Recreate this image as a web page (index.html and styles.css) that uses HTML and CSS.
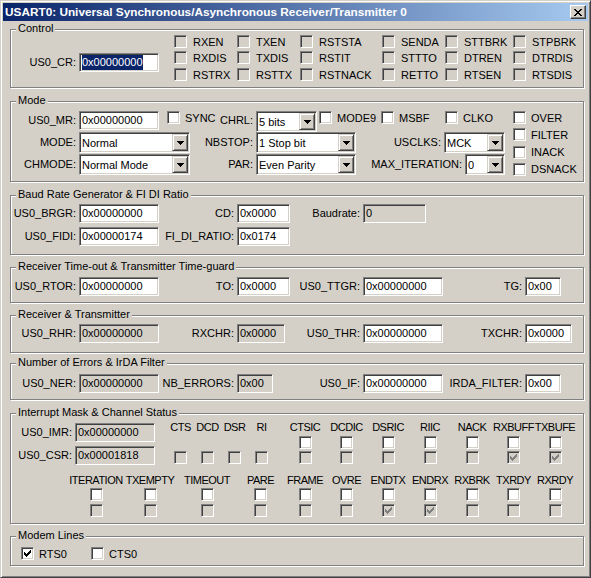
FILE: index.html
```html
<!DOCTYPE html>
<html lang="en">
<head>
    <meta charset="UTF-8">
    <title>USART0 - Peripheral Dialog</title>
    <link rel="stylesheet" href="styles.css">
</head>
<body>
<div class="win">
    <div class="titlebar">
        <span class="title">USART0: Universal Synchronous/Asynchronous Receiver/Transmitter 0</span>
        <span class="close"><svg width="8" height="7" viewBox="0 0 8 7"><path d="M0 0h2v1h-2zM6 0h2v1h-2zM1 1h2v1h-2zM5 1h2v1h-2zM2 2h4v1h-4zM3 3h2v1h-2zM2 4h4v1h-4zM1 5h2v1h-2zM5 5h2v1h-2zM0 6h2v1h-2zM6 6h2v1h-2z" fill="#000"/></svg></span>
    </div>

    <!-- Control -->
    <div class="grp g-ctrl">
        <span class="legend">Control</span>
        <div class="ctrl-left">
            <span class="lbl w68">US0_CR:</span>
            <span class="fld w80"><span class="sel">0x00000000</span></span>
        </div>
        <div class="ctrl-bits">
            <label class="chk"><span class="cb dis"></span>RXEN</label>
            <label class="chk"><span class="cb dis"></span>TXEN</label>
            <label class="chk"><span class="cb dis"></span>RSTSTA</label>
            <label class="chk"><span class="cb dis"></span>SENDA</label>
            <label class="chk"><span class="cb dis"></span>STTBRK</label>
            <label class="chk"><span class="cb dis"></span>STPBRK</label>
            <label class="chk"><span class="cb dis"></span>RXDIS</label>
            <label class="chk"><span class="cb dis"></span>TXDIS</label>
            <label class="chk"><span class="cb dis"></span>RSTIT</label>
            <label class="chk"><span class="cb dis"></span>STTTO</label>
            <label class="chk"><span class="cb dis"></span>DTREN</label>
            <label class="chk"><span class="cb dis"></span>DTRDIS</label>
            <label class="chk"><span class="cb dis"></span>RSTRX</label>
            <label class="chk"><span class="cb dis"></span>RSTTX</label>
            <label class="chk"><span class="cb dis"></span>RSTNACK</label>
            <label class="chk"><span class="cb dis"></span>RETTO</label>
            <label class="chk"><span class="cb dis"></span>RTSEN</label>
            <label class="chk"><span class="cb dis"></span>RTSDIS</label>
        </div>
    </div>

    <!-- Mode -->
    <div class="grp g-mode">
        <span class="legend">Mode</span>
        <div class="mode-main">
            <div class="row r1">
                <span class="lbl w68">US0_MR:</span>
                <span class="fld w80">0x00000000</span>
                <label class="chk w53 ml8"><span class="cb"></span>SYNC</label>
                <span class="lbl w36">CHRL:</span>
                <span class="combo w61">5 bits<span class="dd"><svg width="7" height="4" viewBox="0 0 7 4"><path d="M0 0h7v1h-7zM1 1h5v1h-5zM2 2h3v1h-3zM3 3h1v1h-1z"/></svg></span></span>
                <label class="chk w62 ml2"><span class="cb"></span>MODE9</label>
                <label class="chk w64"><span class="cb"></span>MSBF</label>
                <label class="chk"><span class="cb"></span>CLKO</label>
            </div>
            <div class="row">
                <span class="lbl w68">MODE:</span>
                <span class="combo w111">Normal<span class="dd"><svg width="7" height="4" viewBox="0 0 7 4"><path d="M0 0h7v1h-7zM1 1h5v1h-5zM2 2h3v1h-3zM3 3h1v1h-1z"/></svg></span></span>
                <span class="lbl w66">NBSTOP:</span>
                <span class="combo w100">1 Stop bit<span class="dd"><svg width="7" height="4" viewBox="0 0 7 4"><path d="M0 0h7v1h-7zM1 1h5v1h-5zM2 2h3v1h-3zM3 3h1v1h-1z"/></svg></span></span>
                <span class="lbl w88">USCLKS:</span>
                <span class="combo w61">MCK<span class="dd"><svg width="7" height="4" viewBox="0 0 7 4"><path d="M0 0h7v1h-7zM1 1h5v1h-5zM2 2h3v1h-3zM3 3h1v1h-1z"/></svg></span></span>
            </div>
            <div class="row r3">
                <span class="lbl w68">CHMODE:</span>
                <span class="combo w111">Normal Mode<span class="dd"><svg width="7" height="4" viewBox="0 0 7 4"><path d="M0 0h7v1h-7zM1 1h5v1h-5zM2 2h3v1h-3zM3 3h1v1h-1z"/></svg></span></span>
                <span class="lbl w66">PAR:</span>
                <span class="combo w100">Even Parity<span class="dd"><svg width="7" height="4" viewBox="0 0 7 4"><path d="M0 0h7v1h-7zM1 1h5v1h-5zM2 2h3v1h-3zM3 3h1v1h-1z"/></svg></span></span>
                <span class="lbl w109">MAX_ITERATION:</span>
                <span class="combo w40">0<span class="dd"><svg width="7" height="4" viewBox="0 0 7 4"><path d="M0 0h7v1h-7zM1 1h5v1h-5zM2 2h3v1h-3zM3 3h1v1h-1z"/></svg></span></span>
            </div>
        </div>
        <div class="mode-side">
            <label class="chk"><span class="cb"></span>OVER</label>
            <label class="chk"><span class="cb"></span>FILTER</label>
            <label class="chk"><span class="cb"></span>INACK</label>
            <label class="chk"><span class="cb"></span>DSNACK</label>
        </div>
    </div>

    <!-- Baud Rate -->
    <div class="grp g-baud">
        <span class="legend">Baud Rate Generator &amp; FI DI Ratio</span>
        <div class="regs">
            <span class="lbl">US0_BRGR:</span>
            <span class="fld w80">0x00000000</span>
            <span class="lbl">CD:</span>
            <span class="fld w53">0x0000</span>
            <span class="lbl">Baudrate:</span>
            <span class="fld ro w63">0</span>
            <span class="lbl nl">US0_FIDI:</span>
            <span class="fld w80">0x00000174</span>
            <span class="lbl">FI_DI_RATIO:</span>
            <span class="fld w53">0x0174</span>
        </div>
    </div>

    <!-- Time-out / Time-guard -->
    <div class="grp g-tout">
        <span class="legend">Receiver Time-out &amp; Transmitter Time-guard</span>
        <div class="regs">
            <span class="lbl">US0_RTOR:</span>
            <span class="fld w80">0x00000000</span>
            <span class="lbl">TO:</span>
            <span class="fld w53">0x0000</span>
            <span class="lbl">US0_TTGR:</span>
            <span class="fld w80">0x00000000</span>
            <span class="lbl">TG:</span>
            <span class="fld w36">0x00</span>
        </div>
    </div>

    <!-- Receiver & Transmitter -->
    <div class="grp g-rt">
        <span class="legend">Receiver &amp; Transmitter</span>
        <div class="regs">
            <span class="lbl">US0_RHR:</span>
            <span class="fld ro w80">0x00000000</span>
            <span class="lbl">RXCHR:</span>
            <span class="fld ro w48">0x0000</span>
            <span class="lbl">US0_THR:</span>
            <span class="fld w80">0x00000000</span>
            <span class="lbl">TXCHR:</span>
            <span class="fld w47">0x0000</span>
        </div>
    </div>

    <!-- Errors / IrDA -->
    <div class="grp g-err">
        <span class="legend">Number of Errors &amp; IrDA Filter</span>
        <div class="regs">
            <span class="lbl">US0_NER:</span>
            <span class="fld ro w80">0x00000000</span>
            <span class="lbl">NB_ERRORS:</span>
            <span class="fld ro w36">0x00</span>
            <span class="lbl">US0_IF:</span>
            <span class="fld w80">0x00000000</span>
            <span class="lbl">IRDA_FILTER:</span>
            <span class="fld w36">0x00</span>
        </div>
    </div>

    <!-- Interrupt Mask & Channel Status -->
    <div class="grp g-int">
        <span class="legend">Interrupt Mask &amp; Channel Status</span>
        <div class="int-top">
            <div class="int-regs">
                <div class="row"><span class="lbl w64">US0_IMR:</span><span class="fld ro w80">0x00000000</span></div>
                <div class="row"><span class="lbl w64">US0_CSR:</span><span class="fld ro w80">0x00001818</span></div>
            </div>
            <div class="bits bits-top">
                <div class="bit"><span class="bn">CTS</span><span class="cb none"></span><span class="cb dis"></span></div>
                <div class="bit"><span class="bn">DCD</span><span class="cb none"></span><span class="cb dis"></span></div>
                <div class="bit"><span class="bn">DSR</span><span class="cb none"></span><span class="cb dis"></span></div>
                <div class="bit"><span class="bn">RI</span><span class="cb none"></span><span class="cb dis"></span></div>
                <div class="bit"><span class="bn">CTSIC</span><span class="cb"></span><span class="cb dis"></span></div>
                <div class="bit"><span class="bn">DCDIC</span><span class="cb"></span><span class="cb dis"></span></div>
                <div class="bit"><span class="bn">DSRIC</span><span class="cb"></span><span class="cb dis"></span></div>
                <div class="bit"><span class="bn">RIIC</span><span class="cb"></span><span class="cb dis"></span></div>
                <div class="bit"><span class="bn">NACK</span><span class="cb"></span><span class="cb dis"></span></div>
                <div class="bit"><span class="bn">RXBUFF</span><span class="cb"></span><span class="cb dis on"><svg width="7" height="7" viewBox="0 0 7 7"><path d="M6 0h1v1h-1zM5 1h2v1h-2zM0 2h1v1h-1zM4 2h3v1h-3zM0 3h2v1h-2zM3 3h3v1h-3zM0 4h5v1h-5zM1 5h3v1h-3zM2 6h1v1h-1z"/></svg></span></div>
                <div class="bit"><span class="bn">TXBUFE</span><span class="cb"></span><span class="cb dis on"><svg width="7" height="7" viewBox="0 0 7 7"><path d="M6 0h1v1h-1zM5 1h2v1h-2zM0 2h1v1h-1zM4 2h3v1h-3zM0 3h2v1h-2zM3 3h3v1h-3zM0 4h5v1h-5zM1 5h3v1h-3zM2 6h1v1h-1z"/></svg></span></div>
            </div>
        </div>
        <div class="bits bits-bot">
            <div class="bit"><span class="bn">ITERATION</span><span class="cb"></span><span class="cb dis"></span></div>
            <div class="bit"><span class="bn">TXEMPTY</span><span class="cb"></span><span class="cb dis"></span></div>
            <div class="bit"><span class="bn">TIMEOUT</span><span class="cb"></span><span class="cb dis"></span></div>
            <div class="bit"><span class="bn">PARE</span><span class="cb"></span><span class="cb dis"></span></div>
            <div class="bit"><span class="bn">FRAME</span><span class="cb"></span><span class="cb dis"></span></div>
            <div class="bit"><span class="bn">OVRE</span><span class="cb"></span><span class="cb dis"></span></div>
            <div class="bit"><span class="bn">ENDTX</span><span class="cb"></span><span class="cb dis on"><svg width="7" height="7" viewBox="0 0 7 7"><path d="M6 0h1v1h-1zM5 1h2v1h-2zM0 2h1v1h-1zM4 2h3v1h-3zM0 3h2v1h-2zM3 3h3v1h-3zM0 4h5v1h-5zM1 5h3v1h-3zM2 6h1v1h-1z"/></svg></span></div>
            <div class="bit"><span class="bn">ENDRX</span><span class="cb"></span><span class="cb dis on"><svg width="7" height="7" viewBox="0 0 7 7"><path d="M6 0h1v1h-1zM5 1h2v1h-2zM0 2h1v1h-1zM4 2h3v1h-3zM0 3h2v1h-2zM3 3h3v1h-3zM0 4h5v1h-5zM1 5h3v1h-3zM2 6h1v1h-1z"/></svg></span></div>
            <div class="bit"><span class="bn">RXBRK</span><span class="cb"></span><span class="cb dis"></span></div>
            <div class="bit"><span class="bn">TXRDY</span><span class="cb"></span><span class="cb dis"></span></div>
            <div class="bit"><span class="bn">RXRDY</span><span class="cb"></span><span class="cb dis"></span></div>
        </div>
    </div>

    <!-- Modem Lines -->
    <div class="grp g-modem">
        <span class="legend">Modem Lines</span>
        <label class="chk w70"><span class="cb on"><svg width="7" height="7" viewBox="0 0 7 7"><path d="M6 0h1v1h-1zM5 1h2v1h-2zM0 2h1v1h-1zM4 2h3v1h-3zM0 3h2v1h-2zM3 3h3v1h-3zM0 4h5v1h-5zM1 5h3v1h-3zM2 6h1v1h-1z"/></svg></span>RTS0</label>
        <label class="chk"><span class="cb"></span>CTS0</label>
    </div>
</div>
</body>
</html>
```

FILE: styles.css
```css
* {
    box-sizing: border-box;
}
body {
    margin: 0;
    background: #d4d0c8;
    font-family: "Liberation Sans", Arial, sans-serif;
    font-size: 11px;
    color: #000;
}

/* window frame */
.win {
    width: 591px;
    height: 578px;
    padding: 2px;
    background: #d4d0c8;
    border: 1px solid;
    border-color: #d4d0c8 #404040 #404040 #d4d0c8;
    box-shadow: inset 1px 1px #fff, inset -1px -1px #808080;
}
.titlebar {
    height: 18px;
    display: flex;
    align-items: center;
    padding: 0 2px;
    background: linear-gradient(to right, #0a246a, #a6caf0);
}
.title {
    color: #fff;
    font-size: 11.8px;
    font-weight: bold;
    white-space: nowrap;
}
.close {
    margin-left: auto;
    width: 16px;
    height: 14px;
    display: flex;
    align-items: center;
    justify-content: center;
    background: #d4d0c8;
    border: 1px solid;
    border-color: #fff #404040 #404040 #fff;
    box-shadow: inset -1px -1px #808080;
}
.close svg {
    display: block;
}

/* group boxes */
.grp {
    position: relative;
    width: 574px;
    margin-left: 7px;
    border: 1px solid #808080;
    box-shadow: inset 1px 1px #fff, 1px 1px #fff;
}
.legend {
    position: absolute;
    top: -8px;
    left: 5px;
    padding: 0 2px;
    line-height: 13px;
    background: #d4d0c8;
    white-space: nowrap;
}
.g-ctrl  { margin-top: 8px;  height: 59px; padding-top: 5px; display: flex; align-items: flex-start; }
.g-mode  { margin-top: 13px; height: 81px; padding-top: 9px; display: flex; align-items: flex-start; }
.g-baud  { margin-top: 13px; height: 60px; padding-top: 8px; }
.g-tout  { margin-top: 12px; height: 36px; padding-top: 9px; }
.g-rt    { margin-top: 12px; height: 38px; padding-top: 8px; }
.g-err   { margin-top: 10px; height: 37px; padding-top: 10px; }
.g-int   { margin-top: 13px; height: 111px; padding-top: 7px; }
.g-modem { margin-top: 12px; height: 30px; padding: 10px 0 0 10px; display: flex; align-items: flex-start; }

/* basic controls */
.row {
    display: flex;
    align-items: center;
}
.lbl {
    flex: none;
    text-align: right;
    padding-right: 3px;
    line-height: 19px;
    white-space: nowrap;
}
.fld {
    flex: none;
    height: 19px;
    padding: 0 2px;
    line-height: 17px;
    background: #fff;
    border: 1px solid;
    border-color: #808080 #fff #fff #808080;
    box-shadow: inset 1px 1px #404040, inset -1px -1px #d4d0c8;
    white-space: nowrap;
    overflow: hidden;
}
.fld.ro {
    background: #d4d0c8;
}
.sel {
    display: inline-block;
    line-height: 15px;
    background: #0a246a;
    color: #fff;
}
.combo {
    flex: none;
    display: flex;
    align-items: center;
    height: 21px;
    padding: 1px 1px 1px 2px;
    background: #fff;
    border: 1px solid;
    border-color: #808080 #fff #fff #808080;
    box-shadow: inset 1px 1px #404040, inset -1px -1px #d4d0c8;
    white-space: nowrap;
}
.dd {
    margin-left: auto;
    width: 16px;
    height: 17px;
    display: flex;
    align-items: center;
    justify-content: center;
    background: #d4d0c8;
    border: 1px solid;
    border-color: #d4d0c8 #404040 #404040 #d4d0c8;
    box-shadow: inset 1px 1px #fff, inset -1px -1px #808080;
}
.dd svg {
    display: block;
}
.chk {
    flex: none;
    display: flex;
    align-items: center;
    gap: 5px;
    height: 13px;
    white-space: nowrap;
}
.cb {
    flex: none;
    display: block;
    width: 13px;
    height: 13px;
    padding: 2px;
    background: #fff;
    border: 1px solid;
    border-color: #808080 #fff #fff #808080;
    box-shadow: inset 1px 1px #404040, inset -1px -1px #d4d0c8;
}
.cb.dis {
    background: #d4d0c8;
}
.cb svg {
    display: block;
    fill: #000;
}
.cb.dis svg {
    fill: #808080;
}
.cb.none {
    visibility: hidden;
}

/* widths */
.w36  { width: 36px; }
.w40  { width: 40px; }
.w47  { width: 47px; }
.w48  { width: 48px; }
.w53  { width: 53px; }
.w61  { width: 61px; }
.w62  { width: 62px; }
.w63  { width: 63px; }
.w64  { width: 64px; }
.w66  { width: 66px; }
.w68  { width: 68px; }
.w70  { width: 70px; }
.w80  { width: 80px; }
.w88  { width: 88px; }
.w100 { width: 100px; }
.w109 { width: 109px; }
.w111 { width: 111px; }
.ml2  { margin-left: 2px; }
.ml8  { margin-left: 8px; }

/* control */
.ctrl-left {
    display: flex;
    margin-top: 18px;
}
.ctrl-bits {
    margin-left: 15px;
    display: grid;
    grid-template-columns: 63px 63px 82px 63px 68px auto;
    grid-template-rows: 16px 17px 16px;
}
.ctrl-bits .chk {
    gap: 6px;
}

/* mode */
.mode-main .row {
    height: 21px;
}
.mode-main .r1 {
    align-items: flex-start;
}
.mode-main .r3 {
    margin-top: 1px;
}
.mode-side {
    margin-left: 8px;
    height: 65px;
    display: flex;
    flex-direction: column;
    justify-content: space-between;
}

/* register rows */
.regs {
    display: grid;
    grid-template-columns: 68px 80px 78px 53px 73px 80px 82px 1fr;
    row-gap: 4px;
    align-items: center;
}
.regs .nl {
    grid-column: 1;
}

/* interrupt mask & status */
.int-top {
    display: flex;
    align-items: flex-start;
}
.int-regs {
    margin-top: 2px;
}
.int-regs .row + .row {
    margin-top: 4px;
}
.bits {
    display: grid;
}
.bits-top {
    margin-left: 12px;
    grid-template-columns: 27px 27px 27px 27px 9px 42px 41px 42px 42px 42px 41px 42px;
}
.bits-top .bit:nth-child(5) {
    grid-column: 6;
}
.bits-top .cb {
    margin-top: 2px;
}
.bits-bot {
    margin: 9px 0 0 58px;
    grid-template-columns: 54px 54px 60px 47px 42px 41px 42px 42px 42px 41px 42px;
}
.bits-bot .cb {
    margin-top: 1px;
}
.bits-bot .cb + .cb {
    margin-top: 3px;
}
.bit {
    display: flex;
    flex-direction: column;
    align-items: center;
}
.bn {
    line-height: 13px;
    letter-spacing: -0.5px;
    white-space: nowrap;
}
```
